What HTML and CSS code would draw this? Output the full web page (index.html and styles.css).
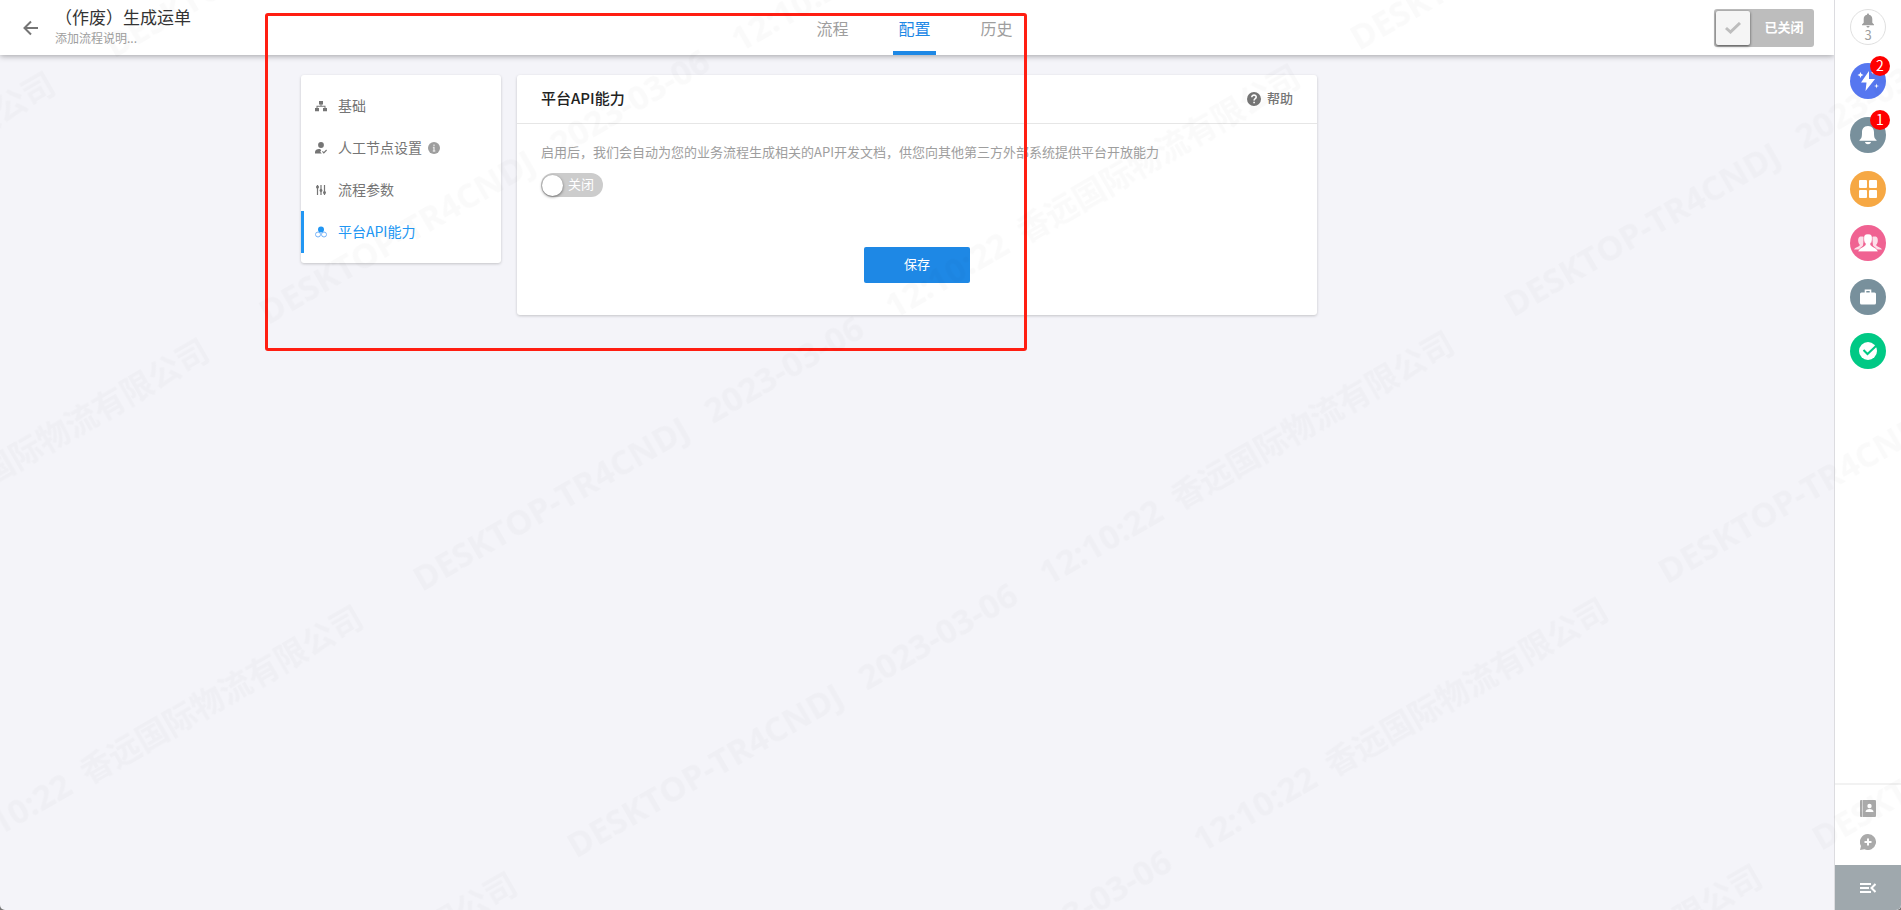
FILE: index.html
```html
<!DOCTYPE html>
<html lang="zh-CN">
<head>
    <meta charset="UTF-8">
    <meta name="viewport" content="width=device-width, initial-scale=1.0">
    <title>（作废）生成运单</title>
    <link rel="stylesheet" href="styles.css">
</head>
<body>
<div class="app">
    <div class="page">
        <header class="topbar">
            <div class="topbar-left">
                <button class="back" aria-label="返回">
                    <svg width="16" height="16" viewBox="0 0 16 16" fill="none" stroke="#757575" stroke-width="2"><path d="M15 8H2M8 1.500L1.500 8L8 14.500"/></svg>
                </button>
                <div class="heading">
                    <h1 class="title">（作废）生成运单</h1>
                    <p class="subtitle">添加流程说明...</p>
                </div>
            </div>
            <nav class="tabs">
                <a class="tab" href="#flow">流程</a>
                <a class="tab active" href="#config">配置</a>
                <a class="tab" href="#history">历史</a>
            </nav>
            <label class="publish">
                <input type="checkbox" class="hidden-check">
                <span class="publish-knob">
                    <svg width="16" height="12" viewBox="0 0 16 12" fill="none" stroke="#bdbdbd" stroke-width="3"><path d="M1 6L5.500 10L15 1"/></svg>
                </span>
                <span class="publish-text label">已关闭</span>
            </label>
        </header>

        <main class="content">
            <nav class="menu card">
                <a class="menu-item" href="#base">
                    <svg class="icon" viewBox="0 0 12 12" fill="currentColor"><path d="M4 1h4v3.500H6.500v1.200H10.500V8H12v3.200H8V8h1.500V6.700h-7V8H4v3.200H0V8h1.500V5.700h4V4.500H4z"/></svg>
                    <span class="label">基础</span>
                </a>
                <a class="menu-item" href="#manual">
                    <svg class="icon" viewBox="0 0 12 12" fill="currentColor"><circle cx="6" cy="3" r="2.900"/><path d="M0 11.500V10c0-2 2-3 4-3h1.200l1 1.500-1 1.200 1.600 1.800zM7 9.800l.8-.8 1 1L11.200 7.600l.8.8-3.200 3.300z"/></svg>
                    <span class="label">人工节点设置</span>
                    <svg class="icon info" viewBox="0 0 12 12"><circle cx="6" cy="6" r="6" fill="#9e9e9e"/><path d="M6 2.500v1.500M4.900 5.500H6v3.500M4.800 9h2.500" stroke="#e4e4e4" stroke-width="1.300" fill="none"/></svg>
                </a>
                <a class="menu-item" href="#params">
                    <svg class="icon" viewBox="0 0 12 12" fill="none" stroke="currentColor" stroke-width="1.200"><path d="M2.500 1v10M6 1v10M9.500 1v10"/><g fill="currentColor" stroke="none"><circle cx="2.500" cy="3" r="1.500"/><circle cx="6" cy="6.500" r="1.400"/><circle cx="9.500" cy="8.500" r="1.500"/></g></svg>
                    <span class="label">流程参数</span>
                </a>
                <a class="menu-item active" href="#api">
                    <svg class="icon" viewBox="0 0 12 12" fill="none" stroke="#78b4f8"><circle cx="3" cy="8.500" r="2.500"/><circle cx="9" cy="8.500" r="2.500"/><circle cx="6" cy="3.500" r="3" fill="#2196f3" stroke="none"/></svg>
                    <span class="label">平台API能力</span>
                </a>
            </nav>

            <section class="panel card">
                <div class="panel-head">
                    <h2 class="label">平台API能力</h2>
                    <a class="help" href="#help">
                        <svg width="14" height="14" viewBox="0 0 14 14"><circle cx="7" cy="7" r="7" fill="#757575"/><path d="M4.800 5.200C4.800 2.300 9.300 2.500 9.200 5.100C9.200 6.700 7.100 6.700 7.100 8.500M7.100 9.700V11.300" fill="none" stroke="#fff" stroke-width="1.600"/></svg>
                        <span class="label">帮助</span>
                    </a>
                </div>
                <div class="panel-body">
                    <p class="desc">启用后，我们会自动为您的业务流程生成相关的API开发文档，供您向其他第三方外部系统提供平台开放能力</p>
                    <label class="switch">
                        <input type="checkbox" class="hidden-check">
                        <span class="switch-knob"></span>
                        <span class="label">关闭</span>
                    </label>
                    <button class="save"><span class="label">保存</span></button>
                </div>
            </section>
        </main>
    </div>

    <aside class="rail">
        <div class="rail-apps">
            <button class="app-btn count" aria-label="通知 3">
                <svg width="12" height="15" viewBox="0 0 12 14" fill="#9e9e9e"><path d="M6 0c.7 0 1 .5 1 1.200C9.200 1.700 10.300 3.500 10.300 5.500v3.800l1.700 1.700v.7H0V11l1.700-1.700V5.500c0-2 1.100-3.800 3.300-4.300C5 .5 5.300 0 6 0zM4.500 12.500h3c0 2-3 2-3 0z"/></svg>
                <span>3</span>
            </button>
            <button class="app-btn blue" aria-label="快捷 2">
                <svg width="24" height="24" viewBox="0 0 24 24" fill="#fff"><path d="M13 2L5 13.500h5.500L9.500 22 19 10h-6zM4.500 3l.9 2.100 2.100.9-2.100.9L4.500 9l-.9-2.100L1.500 6l2.100-.9zM17 1.500l.6 1.400 1.400.6-1.400.6-.6 1.400-.6-1.400-1.400-.6 1.400-.6zM20.500 14.500l.6 1.900 1.900.6-1.900.6-.6 1.900-.6-1.900-1.900-.6 1.900-.6z"/></svg>
                <span class="badge">2</span>
            </button>
            <button class="app-btn slate" aria-label="消息 1">
                <svg width="18" height="20" viewBox="0 0 18 20" fill="#fff"><path d="M9 1c4.500 0 6 3 6 6.500 0 4.500.5 6 2.500 7.500v.8H.5V15C2.500 13.500 3 12 3 7.500 3 4 4.500 1 9 1zM6 17h6c-.5 3-5.500 3-6 0z"/></svg>
                <span class="badge">1</span>
            </button>
            <button class="app-btn orange" aria-label="应用">
                <svg width="18" height="18" viewBox="0 0 18 18" fill="#fff"><rect width="8" height="8" rx="1"/><rect x="10" width="8" height="8" rx="1"/><rect y="10" width="8" height="8" rx="1"/><rect x="10" y="10" width="8" height="8" rx="1"/></svg>
            </button>
            <button class="app-btn pink" aria-label="联系人">
                <svg width="28" height="18" viewBox="0 0 28 18" fill="#fff"><g opacity=".8"><path d="M10 3C5 1.500 4 4 4.200 7c.1 1.500.6 2.800 1.600 3.700C6 13 1 13 0 15.500h5l4-4zM18 3c5-1.500 6 1 5.800 4-.1 1.500-.6 2.800-1.600 3.700-.2 2.300 4.800 2.300 5.800 4.800h-5l-4-4z"/></g><path d="M14 0c3.500 0 4.500 2 4.300 5.200-.1 2-.8 3.500-1.800 4.500-.2 3.800 6.500 2.800 7.500 8H4c1-5.200 7.700-4.200 7.500-8-1-1-1.700-2.500-1.800-4.500C9.500 2 10.500 0 14 0z" stroke="#f06292" stroke-width=".6"/></svg>
            </button>
            <button class="app-btn slate" aria-label="工作">
                <svg width="16" height="16" viewBox="0 0 16 16"><rect y="3.500" width="16" height="12" rx="1.500" fill="#fff"/><path d="M5.500 4V1.200h5V4" fill="none" stroke="#fff" stroke-width="1.600"/></svg>
            </button>
            <button class="app-btn green" aria-label="任务">
                <svg width="18" height="18" viewBox="0 0 18 18"><circle cx="9" cy="9" r="9" fill="#fff"/><path d="M4.500 8l4 4L17 4" fill="none" stroke="#00c985" stroke-width="2"/></svg>
            </button>
        </div>
        <div class="rail-tools">
            <button class="tool" aria-label="通讯录">
                <svg width="16" height="17" viewBox="0 0 16 17"><path d="M0 1a1 1 0 0 1 1-1h1.500v17H1a1 1 0 0 1-1-1zM3 0h12a1 1 0 0 1 1 1v15a1 1 0 0 1-1 1H3z" fill="#aaa"/><circle cx="9.500" cy="6" r="2.200" fill="#fff"/><path d="M5.500 12c0-4 8-4 8 0z" fill="#fff"/></svg>
            </button>
            <button class="tool" aria-label="新建会话">
                <svg width="16" height="16" viewBox="0 0 16 16"><path d="M8 0a8 8 0 1 1-3.500 15.200L0 16l1-4A8 8 0 0 1 8 0z" fill="#aaa"/><path d="M8 4.500v7M4.500 8h7" stroke="#fff" stroke-width="2"/></svg>
            </button>
        </div>
        <button class="collapse" aria-label="收起">
            <svg width="16" height="12" viewBox="0 0 16 12" fill="none" stroke="#fff" stroke-width="2"><path d="M0 2h11M0 6h9M0 10h11M15.500 2l-4 4 4 4"/></svg>
        </button>
    </aside>

    <div class="mark-frame"></div>

    <!-- company watermark, tiled over everything -->
    <svg class="watermark" aria-hidden="true">
        <defs>
            <pattern id="wm" width="1082" height="308" patternUnits="userSpaceOnUse" patternTransform="translate(322 419) rotate(-30)">
                <text y="200">
                    <tspan x="0">DESKTOP-TR4CNDJ</tspan>
                    <tspan x="336">2023-03-06</tspan>
                    <tspan x="545">12:10:22</tspan>
                    <tspan x="697" class="company">香远国际物流有限公司</tspan>
                </text>
            </pattern>
        </defs>
        <rect width="100%" height="100%" fill="url(#wm)"/>
    </svg>
</div>
</body>
</html>
```
FILE: styles.css
```css
* {
    box-sizing: border-box;
}
body {
    margin: 0;
    background: #777;
    font-family: "Noto Sans CJK SC", sans-serif;
    font-size: 14px;
    color: #757575;
}
h1, h2, p {
    margin: 0;
}
a {
    color: inherit;
    text-decoration: none;
}
button {
    border: 0;
    padding: 0;
    background: none;
    font-family: inherit;
    cursor: pointer;
}
svg {
    display: block;
    flex: none;
}
.app {
    position: relative;
    display: flex;
    height: 100vh;
    overflow: hidden;
    background: #f4f4f9;
    border-radius: 0 0 5px 5px;
}
.page {
    flex: 1;
    min-width: 0;
}
.hidden-check {
    position: absolute;
    opacity: 0;
}
.label {
    display: block;
    padding-bottom: 3px;
}

/* top bar */
.topbar {
    display: grid;
    grid-template-columns: 1fr auto 1fr;
    align-items: center;
    height: 55px;
    padding: 0 20px 0 15px;
    background: #fff;
    box-shadow: 0 1px 6px rgba(0, 0, 0, .35);
}
.topbar-left {
    display: flex;
    align-items: center;
    gap: 8px;
}
.back {
    display: flex;
    align-items: center;
    justify-content: center;
    width: 32px;
    height: 32px;
}
.heading {
    padding-bottom: 3px;
}
.title {
    font-size: 17px;
    font-weight: 400;
    line-height: 24px;
    color: #333;
}
.subtitle {
    font-size: 12px;
    line-height: 18px;
    color: #9e9e9e;
}
.tabs {
    display: flex;
    align-self: stretch;
    gap: 40px;
}
.tab {
    height: 55px;
    padding: 4px 5px 0;
    border-bottom: 4px solid transparent;
    font-size: 16px;
    line-height: 48px;
    color: #9e9e9e;
}
.tab.active {
    color: #1e88e5;
    border-color: #1e88e5;
}
.publish {
    position: relative;
    display: flex;
    align-items: center;
    justify-self: end;
    width: 100px;
    height: 38px;
    padding: 2px;
    border-radius: 3px;
    background: #bdbdbd;
}
.publish-knob {
    display: flex;
    align-items: center;
    justify-content: center;
    width: 34px;
    height: 34px;
    border-radius: 2px;
    background: #f5f5f5;
    box-shadow: 0 1px 3px rgba(0, 0, 0, .6);
}
.publish-text {
    flex: 1;
    padding-left: 6px;
    text-align: center;
    font-size: 13px;
    font-weight: 700;
    color: #fff;
}

/* content */
.content {
    display: flex;
    align-items: flex-start;
    gap: 16px;
    max-width: 1232px;
    margin: 20px auto 0;
}
.card {
    background: #fff;
    border-radius: 3px;
    box-shadow: 0 1px 3px rgba(0, 0, 0, .2);
}
.menu {
    width: 200px;
    padding: 10px 0;
}
.menu-item {
    display: flex;
    align-items: center;
    height: 42px;
    padding-left: 11px;
    border-left: 3px solid transparent;
}
.menu-item.active {
    color: #2196f3;
    border-color: #2196f3;
}
.icon {
    width: 12px;
    height: 12px;
    margin-right: 11px;
}
.icon.info {
    margin: 0 0 0 6px;
}
.panel {
    width: 800px;
}
.panel-head {
    display: flex;
    align-items: center;
    justify-content: space-between;
    height: 49px;
    padding: 0 24px;
    border-bottom: 1px solid #e6e6e6;
}
.panel-head h2 {
    font-size: 15px;
    font-weight: 500;
    color: #222;
}
.help {
    display: flex;
    align-items: center;
    gap: 6px;
    font-size: 13px;
    font-weight: 500;
}
.panel-body {
    display: flex;
    flex-direction: column;
    align-items: flex-start;
    padding: 18px 24px 32px;
}
.desc {
    font-size: 13px;
    line-height: 20px;
    color: #9e9e9e;
}
.switch {
    position: relative;
    display: flex;
    align-items: center;
    gap: 5px;
    width: 62px;
    height: 24px;
    margin: 11px 0 50px;
    padding-left: 1px;
    border-radius: 12px;
    background: #ccc;
    font-size: 13px;
    line-height: 21px;
    color: #fff;
}
.switch-knob {
    width: 21px;
    height: 21px;
    border-radius: 50%;
    background: #fff;
    box-shadow: 0 1px 3px rgba(0, 0, 0, .5);
}
.save {
    align-self: center;
    width: 106px;
    height: 36px;
    border-radius: 2px;
    background: #1e88e5;
    font-size: 13px;
    color: #fff;
}

/* right rail */
.rail {
    display: flex;
    flex-direction: column;
    width: 67px;
    background: #fff;
    border-left: 1px solid #dcdce0;
    z-index: 1;
}
.rail-apps {
    flex: 1;
    display: flex;
    flex-direction: column;
    align-items: center;
    gap: 18px;
    padding-top: 9px;
}
.app-btn {
    position: relative;
    display: flex;
    align-items: center;
    justify-content: center;
    width: 36px;
    height: 36px;
    border-radius: 50%;
}
.app-btn.count {
    flex-direction: column;
    border: 1px solid #e0e0e0;
    font-size: 13px;
    line-height: 14px;
    color: #9e9e9e;
}
.blue {
    background: #5677f0;
}
.slate {
    background: #78909c;
}
.orange {
    background: #f6a844;
}
.pink {
    background: #f06292;
}
.green {
    background: #00c985;
}
.badge {
    position: absolute;
    top: -7px;
    right: -4px;
    width: 20px;
    height: 20px;
    border-radius: 50%;
    background: #f00;
    font-size: 14px;
    line-height: 18px;
    color: #fff;
}
.rail-tools {
    display: flex;
    flex-direction: column;
    align-items: center;
    gap: 17px;
    padding: 15px 0;
    border-top: 2px solid #f2f2f2;
}
.collapse {
    display: flex;
    align-items: center;
    justify-content: center;
    height: 45px;
    background: #9fa8ad;
}

/* overlays */
.mark-frame {
    position: absolute;
    top: 13px;
    left: 265px;
    width: 762px;
    height: 338px;
    border: 3px solid #ff1e12;
    border-radius: 3px;
    pointer-events: none;
}
.watermark {
    position: absolute;
    top: 0;
    left: 0;
    width: 100%;
    height: 100%;
    z-index: 2;
    pointer-events: none;
}
.watermark text {
    font-family: "Open Sans", "Noto Sans CJK SC", sans-serif;
    font-size: 34px;
    font-weight: 700;
    fill: rgba(0, 0, 0, .02);
}
.watermark .company {
    font-size: 32px;
}
```
